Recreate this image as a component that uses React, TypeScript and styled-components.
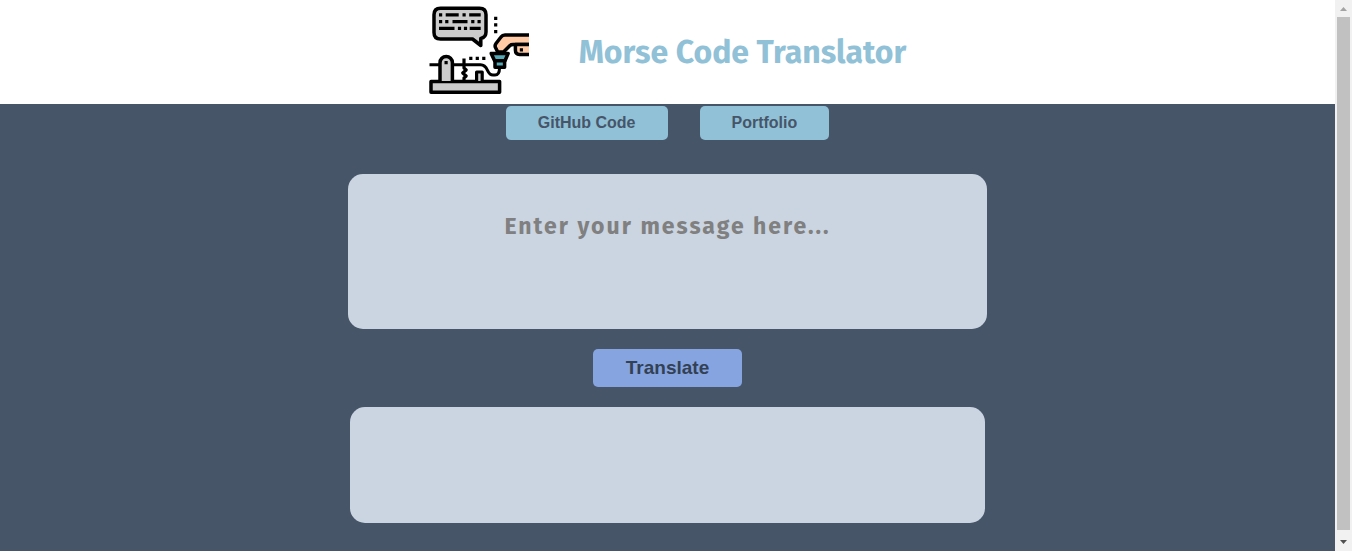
import React, { useState } from 'react';
import styled, { createGlobalStyle } from 'styled-components';

const GlobalStyle = createGlobalStyle`
  * { box-sizing: border-box; }
  body { margin: 0; background: #475569; }
`;

const Shell = styled.div`
  display: flex;
  height: 100vh;
  overflow: hidden;
`;

const Page = styled.div`
  flex: 1;
  min-width: 0;
  background: #475569;
`;

const Header = styled.header`
  display: flex;
  justify-content: center;
  align-items: center;
  gap: 50px;
  background: #ffffff;
`;

const Logo = styled.svg`
  display: block;
  width: 100px;
  height: 104px;
`;

const Title = styled.h1`
  margin: 0;
  color: #90c1d7;
  font: 700 32px/40px 'Fira Sans', Roboto, sans-serif;
`;

const Nav = styled.nav`
  display: flex;
  justify-content: center;
  gap: 32px;
  padding-top: 2px;
`;

const NavLink = styled.a`
  padding: 8px 32px;
  border-radius: 5px;
  background: #90c1d7;
  color: #475569;
  font: 700 16px/18px 'Liberation Sans', Arial, sans-serif;
  text-decoration: none;
`;

const Main = styled.main`
  display: flex;
  flex-direction: column;
  align-items: center;
  gap: 20px;
  padding: 34px 16px 28px;
`;

const Message = styled.textarea`
  display: block;
  width: 100%;
  max-width: 639px;
  height: 155px;
  padding: 36px 32px;
  border: 0;
  border-radius: 15px;
  outline: 0;
  resize: none;
  background: #cbd5e1;
  color: #475569;
  font: 700 23px/32px 'Fira Sans', Roboto, sans-serif;
  letter-spacing: 2px;
  text-align: center;
  &::placeholder { color: #808080; opacity: 1; }
`;

const TranslateButton = styled.button`
  padding: 8px 33px;
  border: 0;
  border-radius: 5px;
  background: #86a4e0;
  color: #334155;
  font: 700 19px/22px 'Liberation Sans', Arial, sans-serif;
`;

const Result = styled.output`
  display: block;
  width: 100%;
  max-width: 635px;
  min-height: 116px;
  padding: 32px;
  border-radius: 15px;
  background: #cbd5e1;
  color: #475569;
  font: 700 23px/32px 'Fira Sans', Roboto, sans-serif;
  text-align: center;
`;

const Scrollbar = styled.div`
  display: flex;
  flex-direction: column;
  width: 17px;
  background: #f1f1f1;
`;

const ScrollArrow = styled.svg`
  display: block;
  width: 17px;
  height: 17px;
`;

const ScrollThumb = styled.div`
  flex: 1;
  margin: 0 2px 4px;
  background: #c1c1c1;
`;

const CODES: Record<string, string> = {
  a: '.-', b: '-...', c: '-.-.', d: '-..', e: '.', f: '..-.', g: '--.', h: '....', i: '..',
  j: '.---', k: '-.-', l: '.-..', m: '--', n: '-.', o: '---', p: '.--.', q: '--.-', r: '.-.',
  s: '...', t: '-', u: '..-', v: '...-', w: '.--', x: '-..-', y: '-.--', z: '--..', ' ': '/',
};

const toMorse = (text: string) =>
  text.toLowerCase().split('').map((c) => CODES[c] ?? c).join(' ');

function TelegraphLogo() {
  return (
    <Logo viewBox="0 0 100 104" role="img" aria-label="Telegraph key">
      <g fill="none" stroke="#000" strokeWidth="3.5" strokeLinejoin="round">
        {/* speech bubble */}
        <path
          d="M11.5 8.2H50.5Q57 8.2 57 14.7V32Q57 37.4 51.8 38.4V45.5L43.5 39H11.5Q5 39 5 32.5V14.7Q5 8.2 11.5 8.2Z"
          fill="#ccc"
        />
        {/* base, lever and post */}
        <rect x="2" y="81.4" width="68.6" height="10.8" fill="#ccc" />
        <path d="M0.5 64.8H10M24 64.8H51.5C60 64.8 57 75 64 75H66Q70.5 75 70.5 68" strokeWidth="3" />
        <path d="M11 81V62.7A6.2 6.2 0 0 1 23.4 62.7V81" fill="#ccc" />
        <path d="M35 58.5V68L37.2 70L33.7 73L37.2 76L35 78V81" strokeWidth="3.2" />
        <path d="M47.6 81V72H53.2V81" fill="#ccc" strokeWidth="3.2" />
        {/* hand */}
        <path
          d="M102 34.9H76Q73.5 34.9 72 37L67 43.5Q65.2 46 67 48.5L68.7 52H74.5L81 45.5Q82 44.6 84 44.6H102"
          fill="#ffcaa5"
        />
        <path d="M102 54.4H90.5Q86.4 54.4 86.4 50V44.6H102" fill="#ffcaa5" />
        {/* key knob */}
        <path d="M62.2 53.4H79.2L76 60.8H65.6Z" fill="#56aab7" />
        <path d="M66 60.8H75.6V67.2H66Z" fill="#56aab7" />
      </g>
      <g stroke="#000" strokeWidth="3.2">
        <path d="M10 14.8h3.2M16.7 14.8h13M33.5 14.8h3.2M40.2 14.8h11.5" />
        <path d="M10 21.6h3.2M16.2 21.6h3.2M23.5 21.6h15M42.2 21.6h3.2M48.5 21.6h3.2" />
        <path d="M10 28.4h15.5M28.9 28.4h3.2M34.9 28.4h3.2M40.7 28.4h11" />
        <path d="M65.1 18.3h3.2M65.1 24.8h3.2M65.1 31.6h3.2" />
        <path d="M40.2 58.4h3.2M46.7 58.4h3.2M53.2 58.4h3.2" />
        <path d="M15.5 62.6h3.2M90.8 49.8h3.2" />
      </g>
    </Logo>
  );
}

export default function App() {
  const [message, setMessage] = useState('');
  const [result, setResult] = useState('');

  return (
    <>
      <GlobalStyle />
      <Shell>
        <Page>
          <Header>
            <TelegraphLogo />
            <Title>Morse Code Translator</Title>
          </Header>
          <Nav>
            <NavLink href="#github">GitHub Code</NavLink>
            <NavLink href="#portfolio">Portfolio</NavLink>
          </Nav>
          <Main>
            <Message
              aria-label="Message"
              placeholder="Enter your message here..."
              value={message}
              onChange={(e) => setMessage(e.target.value)}
            />
            <TranslateButton type="button" onClick={() => setResult(toMorse(message))}>
              Translate
            </TranslateButton>
            <Result aria-label="Translation">{result}</Result>
          </Main>
        </Page>
        <Scrollbar aria-hidden="true">
          <ScrollArrow viewBox="0 0 17 17">
            <path d="M5 11L8.5 7L12 11Z" fill="#a3a3a3" />
          </ScrollArrow>
          <ScrollThumb />
          <ScrollArrow viewBox="0 0 17 17">
            <path d="M5 6L8.5 10L12 6Z" fill="#505050" />
          </ScrollArrow>
        </Scrollbar>
      </Shell>
    </>
  );
}
